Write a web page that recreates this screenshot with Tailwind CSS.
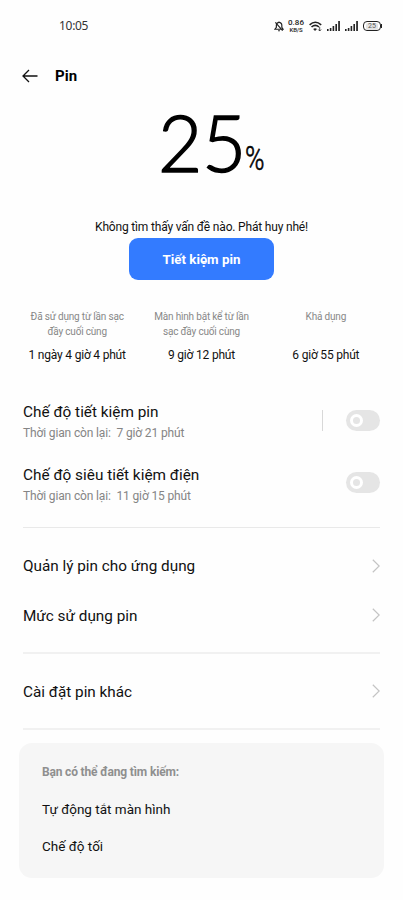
<!DOCTYPE html>
<html lang="vi">
<head>
<meta charset="utf-8">
<meta name="viewport" content="width=device-width, initial-scale=1">
<title>Pin</title>
<script src="https://cdn.jsdelivr.net/npm/@tailwindcss/browser@4"></script>
</head>
<body class="w-[403px] h-[900px] overflow-hidden bg-[#fefefe] text-[#111] font-['Roboto',sans-serif] whitespace-nowrap">
<header class="flex h-[52px] items-center pl-[59px] pr-[21px]">
  <span class="font-['Noto_Sans',sans-serif] text-[12px] leading-[16px] tracking-[-0.300px] text-[#333]">10:05</span>
  <div class="ml-auto flex items-center">
    <svg class="mr-[4px]" width="10" height="11" viewBox="0 0 11 12" fill="none" stroke="#222" stroke-width="1.3"><path d="M1 9h9L8.600 7V4.500a3 3 0 0 0-6 0V7zM4.500 10.700h2M5.500 0.500v1M1.500 1.500l8 9"/></svg>
    <div class="flex w-[16px] flex-col items-center text-[#222]">
      <span class="h-[6px] text-[8px] leading-[6px] font-medium">0.86</span>
      <span class="mt-[1px] h-[5px] text-[6px] leading-[5px] font-medium tracking-[-0.200px]">KB/S</span>
    </div>
    <svg class="ml-[5px]" width="13" height="11" viewBox="0 0 13 11" fill="none" stroke="#222" stroke-width="1.600"><path d="M.6 3.800Q6.300-1.300 12.200 3.800M2.500 6Q6.300 2.600 10 6"/><path d="M4.200 8Q6 6.300 8 8L6 10z" fill="#222" stroke="none"/><path d="M10.700 6v4M9.300 8.500l1.400 1.500L12.100 8.500" stroke-width=".8"/></svg>
    <svg class="ml-[5px]" width="13" height="10" viewBox="0 0 13 10" fill="#222"><path d="M0 8h1.600v2H0zM2.800 7h1.600v3H2.800zM5.600 5h1.600v5H5.600zM8.400 3H10v7H8.400zM11.200 0h1.700v10h-1.700z"/></svg>
    <svg class="ml-[5px]" width="13" height="10" viewBox="0 0 13 10" fill="#222"><path d="M0 8h1.600v2H0zM2.800 7h1.600v3H2.800zM5.600 5h1.600v5H5.600zM8.400 3H10v7H8.400zM11.200 0h1.700v10h-1.700z"/></svg>
    <div class="ml-[5px] flex h-[10px] w-[18px] items-center justify-center rounded-[4px] border border-[#222] text-[7px] leading-none text-[#555]"><span class="rounded-[2px] bg-[#e4e4e4] px-[2px]">25</span></div>
    <i class="h-[4px] w-[1px] bg-[#222]"></i>
  </div>
</header>
<div class="flex h-[48px] items-center pl-[22px]">
  <svg width="16" height="14" viewBox="0 0 16 14" fill="none" stroke="#111" stroke-width="1.300"><path d="M15.500 7H1M7 1L1 7l6 6"/></svg>
  <h1 class="ml-[17px] text-[15px] leading-[20px] font-bold text-black">Pin</h1>
</div>
<main>
  <div class="flex h-[120px] items-start pl-[158px] text-black">
    <span class="mt-[-6px] w-[87px] origin-left scale-x-[0.98] font-['Lato',sans-serif] text-[78px] leading-[96px] font-light tracking-[-0.300px] [-webkit-text-stroke:1.500px_black]">25</span>
    <span class="mt-[39px] w-[22px] origin-left scale-x-[0.8] text-[33px] leading-[40px] font-light [-webkit-text-stroke:0.600px_black]">%</span>
  </div>
  <p class="h-[18px] text-center text-[12px] leading-[15px] tracking-[-0.180px]">Không tìm thấy vấn đề nào. Phát huy nhé!</p>
  <button class="mx-auto block h-[42px] w-[145px] rounded-[9px] bg-[#337bff] text-[13.300px] leading-[43px] font-bold text-white">Tiết kiệm pin</button>
  <section class="mx-[15px] mt-[29px] grid h-[85px] grid-cols-3 text-center">
    <div><p class="h-[38px] text-[10px] leading-[15px] tracking-[-0.180px] text-[#888]">Đã sử dụng từ lần sạc<br>đầy cuối cùng</p><p class="text-[12px] leading-[16px] tracking-[-0.200px]">1 ngày 4 giờ 4 phút</p></div>
    <div><p class="h-[38px] text-[10px] leading-[15px] tracking-[-0.180px] text-[#888]">Màn hình bật kể từ lần<br>sạc đầy cuối cùng</p><p class="text-[12px] leading-[16px] tracking-[-0.200px]">9 giờ 12 phút</p></div>
    <div><p class="h-[38px] text-[10px] leading-[15px] tracking-[-0.180px] text-[#888]">Khả dụng</p><p class="text-[12px] leading-[16px] tracking-[-0.200px]">6 giờ 55 phút</p></div>
  </section>
  <section class="mx-[23px] flex h-[134px] flex-col border-b border-[#e9e9e9] pt-[8px]">
    <div class="flex h-[63px] items-start">
      <div><h2 class="text-[15.350px] leading-[20px]">Chế độ tiết kiệm pin</h2><p class="mt-[3px] text-[12px] leading-[16px] tracking-[-0.140px] text-[#858585]">Thời gian còn lại:&nbsp; 7 giờ 21 phút</p></div>
      <i class="mt-[8px] mr-[23px] ml-auto h-[21px] w-px bg-[#d8d8d8]"></i>
      <div class="mt-[7.500px] flex h-[21px] w-[34px] items-center rounded-full bg-[#e5e5e5] pl-[4px]"><i class="size-[13px] rounded-full border-[3px] border-white"></i></div>
    </div>
    <div class="flex h-[63px] items-start">
      <div><h2 class="text-[15.350px] leading-[20px]">Chế độ siêu tiết kiệm điện</h2><p class="mt-[3px] text-[12px] leading-[16px] tracking-[-0.140px] text-[#858585]">Thời gian còn lại:&nbsp; 11 giờ 15 phút</p></div>
      <div class="mt-[7.500px] ml-auto flex h-[21px] w-[34px] items-center rounded-full bg-[#e5e5e5] pl-[4px]"><i class="size-[13px] rounded-full border-[3px] border-white"></i></div>
    </div>
  </section>
  <section class="mx-[23px] h-[126px] border-b-2 border-[#f1f1f1] pt-[13px]">
    <div class="flex h-[50px] items-center justify-between text-[15.300px]"><span>Quản lý pin cho ứng dụng</span><svg class="mb-[1px]" width="8" height="14" viewBox="0 0 8 14" fill="none" stroke="#c4c4c4" stroke-width="1.200"><path d="M.8.800L7.200 7 .8 13.200"/></svg></div>
    <div class="flex h-[50px] items-center justify-between text-[15.300px]"><span>Mức sử dụng pin</span><svg class="mb-[2px]" width="8" height="14" viewBox="0 0 8 14" fill="none" stroke="#c4c4c4" stroke-width="1.200"><path d="M.8.800L7.200 7 .8 13.200"/></svg></div>
  </section>
  <section class="mx-[23px] h-[76px] border-b-2 border-[#f1f1f1] pt-[13px]">
    <div class="flex h-[50px] items-center justify-between text-[15.300px]"><span>Cài đặt pin khác</span><svg class="mb-[2px]" width="8" height="14" viewBox="0 0 8 14" fill="none" stroke="#c4c4c4" stroke-width="1.200"><path d="M.8.800L7.200 7 .8 13.200"/></svg></div>
  </section>
  <section class="mx-[19px] mt-[13px] h-[135px] rounded-[13px] bg-[#f6f6f6] px-[23px] pt-[21px]">
    <h3 class="text-[12px] leading-[16px] font-bold tracking-[-0.170px] text-[#8f8f8f]">Bạn có thể đang tìm kiếm:</h3>
    <p class="mt-[19px] text-[13.500px] leading-[20px]">Tự động tắt màn hình</p>
    <p class="mt-[17px] text-[13.500px] leading-[20px]">Chế độ tối</p>
  </section>
</main>
</body>
</html>
